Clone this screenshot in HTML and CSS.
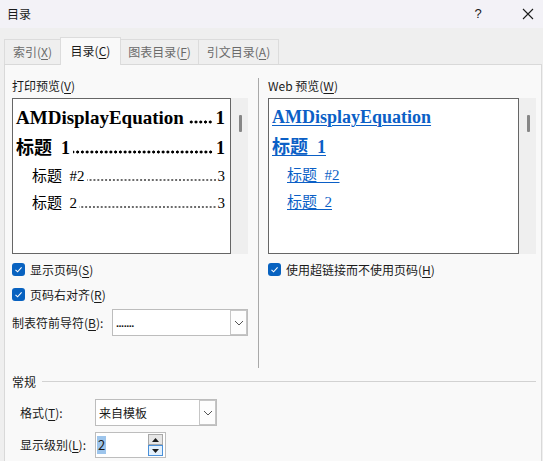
FILE: index.html
```html
<!DOCTYPE html>
<html>
<head>
<meta charset="utf-8">
<link rel="stylesheet" href="styles.css">
</head>
<body>
<div class="dialog">
  <div class="titlebar">
    <span class="title">目录</span>
    <span class="tb-help">?</span>
    <span class="tb-close"><svg width="12" height="12" viewBox="0 0 12 12"><path d="M1 1 L11 11 M11 1 L1 11" stroke="#1b1b1b" stroke-width="1.1" fill="none"/></svg></span>
  </div>
  <div class="tabstrip">
    <div class="tab">索引(<u>X</u>)</div>
    <div class="tab active">目录(<u>C</u>)</div>
    <div class="tab">图表目录(<u>F</u>)</div>
    <div class="tab">引文目录(<u>A</u>)</div>
  </div>
  <div class="panel">
    <div class="cols">
      <div class="col col-left">
        <div class="label">打印预览(<u>V</u>)</div>
        <div class="preview-wrap">
          <div class="preview print">
            <div class="pl l1"><span class="t">AMDisplayEquation</span><span class="lead bold"></span><span class="n">1</span></div>
            <div class="pl l2"><span class="t">标题&nbsp; 1</span><span class="lead bold"></span><span class="n">1</span></div>
            <div class="pl l3"><span class="t">标题&nbsp; #2</span><span class="lead"></span><span class="n">3</span></div>
            <div class="pl l4"><span class="t">标题&nbsp; 2</span><span class="lead"></span><span class="n">3</span></div>
          </div>
          <div class="vscroll"><div class="thumb"></div></div>
        </div>
        <div class="check first"><span class="box"><svg width="13" height="13" viewBox="0 0 13 13"><path d="M3.5 6.8 L5.6 8.8 L9.6 4.4" stroke="#fff" stroke-width="1.1" fill="none"/></svg></span>显示页码(<u>S</u>)</div>
        <div class="check"><span class="box"><svg width="13" height="13" viewBox="0 0 13 13"><path d="M3.5 6.8 L5.6 8.8 L9.6 4.4" stroke="#fff" stroke-width="1.1" fill="none"/></svg></span>页码右对齐(<u>R</u>)</div>
        <div class="leader-row">
          <span class="leader-label">制表符前导符(<u>B</u>):</span>
          <div class="combo leader-combo"><span class="val dots">.......</span><span class="arrow"><svg width="10" height="6" viewBox="0 0 10 6"><path d="M1 1 L5 5 L9 1" stroke="#555" stroke-width="1" fill="none"/></svg></span></div>
        </div>
      </div>
      <div class="vdivider"></div>
      <div class="col col-right">
        <div class="label">Web 预览(<u>W</u>)</div>
        <div class="preview-wrap">
          <div class="preview web">
            <div class="wl w1"><a>AMDisplayEquation</a></div>
            <div class="wl w2"><a>标题&nbsp; 1</a></div>
            <div class="wl w3"><a>标题&nbsp; #2</a></div>
            <div class="wl w4"><a>标题&nbsp; 2</a></div>
          </div>
          <div class="vscroll"><div class="thumb"></div></div>
        </div>
        <div class="check first"><span class="box"><svg width="13" height="13" viewBox="0 0 13 13"><path d="M3.5 6.8 L5.6 8.8 L9.6 4.4" stroke="#fff" stroke-width="1.1" fill="none"/></svg></span>使用超链接而不使用页码(<u>H</u>)</div>
      </div>
    </div>
    <div class="group-head"><span>常规</span><span class="rule"></span></div>
    <div class="form-row fmt-row">
      <span class="form-label">格式(<u>T</u>):</span>
      <div class="combo fmt-combo"><span class="val">来自模板</span><span class="arrow"><svg width="10" height="6" viewBox="0 0 10 6"><path d="M1 1 L5 5 L9 1" stroke="#555" stroke-width="1" fill="none"/></svg></span></div>
    </div>
    <div class="form-row lvl-row">
      <span class="form-label">显示级别(<u>L</u>):</span>
      <div class="spin">
        <span class="spin-val"><span class="sel">2</span></span>
        <span class="spin-btns">
          <span class="sb up"><svg width="7" height="4" viewBox="0 0 7 4"><path d="M3.5 0 L7 4 L0 4 Z" fill="#1b1b1b"/></svg></span>
          <span class="sb down"><svg width="7" height="4" viewBox="0 0 7 4"><path d="M0 0 L7 0 L3.5 4 Z" fill="#1b1b1b"/></svg></span>
        </span>
      </div>
    </div>
  </div>
</div>
</body>
</html>
```

FILE: styles.css
```css
* { box-sizing: border-box; }
html, body { margin: 0; padding: 0; }
body {
  width: 543px;
  height: 461px;
  overflow: hidden;
  background: #efefef;
  font-family: "Noto Sans CJK SC", "Noto Sans", sans-serif;
  font-size: 12px;
  color: #1a1a1a;
}
u { text-decoration: underline; text-underline-offset: 2px; }
.dialog { width: 543px; height: 461px; display: flex; flex-direction: column; }

.titlebar {
  height: 28px;
  background: #f3f2f7;
  display: flex;
  align-items: center;
  padding-left: 7px;
}
.title { font-size: 12px; flex: 1; line-height: 16px; }
.tb-help { width: 12px; font-size: 13px; line-height: 16px; margin-right: 38px; text-align: center; font-family: "Liberation Sans", sans-serif; }
.tb-close { width: 12px; height: 12px; margin-right: 9px; display: flex; }

.tabstrip {
  height: 36px;
  display: flex;
  align-items: flex-end;
  padding-left: 4px;
  background: #efefef;
  position: relative;
  z-index: 2;
}
.tab {
  height: 25px;
  border: 1px solid #dcdcdc;
  border-bottom: none;
  margin-right: -1px;
  padding: 0;
  display: flex;
  align-items: center;
  justify-content: center;
  white-space: nowrap;
  color: #6a6a6a;
  background: #efefef;
  line-height: 16px;
}
.tab:nth-child(1) { width: 57px; }
.tab:nth-child(2) { width: 61px; }
.tab:nth-child(3) { width: 79px; }
.tab:nth-child(4) { width: 81px; }
.tab.active {
  height: 28px;
  margin-bottom: -1px;
  background: #f9f9f9;
  color: #1a1a1a;
  padding-bottom: 1px;
  position: relative;
  z-index: 3;
}

.panel {
  flex: 1;
  margin-left: 4px;
  width: 538px;
  border: 1px solid #d9d9d9;
  border-bottom: none;
  background: #f9f9f9;
  padding: 13px 5px 0 7px;
}
.cols { display: flex; }
.col-left { width: 236px; }
.col-right { width: 268px; }
.vdivider { width: 1px; height: 290px; background: #a9a9a9; margin: 0 9px 0 10px; }
.label { line-height: 16px; height: 16px; margin-bottom: 4px; }

.preview-wrap { display: flex; height: 156px; }
.preview {
  flex: 1;
  background: #fff;
  border: 1px solid #666;
  overflow: hidden;
}
.vscroll { width: 17px; background: #efefef; position: relative; }
.thumb { position: absolute; left: 8px; top: 17px; width: 3px; height: 17px; background: #878787; border-radius: 1px; }

.print { padding: 4px 5px 0 3px; font-family: "Liberation Serif", "Noto Sans CJK SC", serif; color: #000; }
.pl { display: flex; align-items: baseline; white-space: nowrap; }
.pl .t { flex: none; }
.pl .lead {
  flex: 1;
  align-self: baseline;
  height: 2px;
  background-image: radial-gradient(circle, #000 0.55px, transparent 0.9px);
  background-size: 3.9px 2px;
  background-repeat: repeat-x;
  background-position: right bottom;
  margin-right: 1px;
}
.pl .lead.bold {
  height: 4px;
  background-image: radial-gradient(circle, #000 1.3px, transparent 1.8px);
  background-size: 4.75px 4px;
  margin-right: 3px;
}
.pl .n { flex: none; }
.l1 { font-size: 19px; font-weight: bold; height: 30px; line-height: 30px; }
.l1 .lead { margin-left: 4px; }
.l2 { font-size: 18px; font-weight: bold; height: 30px; line-height: 30px; }
.l2 .lead { margin-left: 3px; }
.l3, .l4 { font-size: 15px; height: 27px; line-height: 27px; padding-left: 16px; }
.l3 .lead, .l4 .lead { margin-left: 2px; }

.web { padding: 4px 5px 0 3px; font-family: "Liberation Serif", "Noto Sans CJK SC", serif; }
.web a { color: #0b5fc6; text-decoration: underline; text-decoration-thickness: 1px; text-underline-offset: 2px; }
.wl { white-space: nowrap; }
.w1 { font-size: 18px; font-weight: bold; height: 29px; line-height: 29px; }
.w2 { font-size: 18px; font-weight: bold; height: 30px; line-height: 30px; }
.w3, .w4 { font-size: 15px; height: 27px; line-height: 27px; padding-left: 15px; }

.check { display: flex; align-items: center; height: 25px; line-height: 16px; }
.check.first { margin-top: 3px; }
.box {
  width: 13px; height: 13px;
  border-radius: 3px;
  background: #0862c0;
  display: flex;
  margin-right: 5px;
}

.leader-row { display: flex; align-items: center; margin-top: 2px; height: 27px; }
.leader-label { width: 100px; }
.combo {
  height: 27px;
  border: 1px solid #bdbdbd;
  background: #fff;
  display: flex;
  align-items: stretch;
}
.combo .val { flex: 1; display: flex; align-items: center; padding-left: 3px; line-height: 16px; }
.combo .dots { font-family: "Liberation Sans", sans-serif; font-weight: bold; font-size: 11px; letter-spacing: -0.5px; padding-top: 1px; }
.combo .arrow {
  width: 17px;
  border: 1px solid #c6c6c6;
  background: #fdfdfd;
  display: flex;
  align-items: center;
  justify-content: center;
}
.leader-combo { width: 136px; }

.group-head { display: flex; align-items: center; margin-top: 6px; height: 16px; }
.group-head span:first-child { line-height: 16px; margin-right: 6px; }
.group-head .rule { flex: 1; height: 1px; background: #d2d2d2; margin-top: -2px; }

.form-row { display: flex; align-items: center; padding-left: 8px; }
.form-label { width: 75px; line-height: 16px; }
.fmt-row { margin-top: 9px; }
.fmt-combo { width: 122px; }
.fmt-combo .val { font-size: 12px; padding-left: 3px; }
.lvl-row { margin-top: 6px; }

.spin {
  width: 71px;
  height: 26px;
  border: 1px solid #bdbdbd;
  background: #fff;
  display: flex;
  align-items: center;
}
.spin-val { flex: 1; padding-left: 1px; display: flex; align-items: center; }
.sel { background: #9dc5ec; line-height: 18px; padding: 0 1px; font-size: 13px; }
.spin-btns { width: 15px; display: flex; flex-direction: column; margin-right: 2px; height: 22px; }
.sb { flex: 1; display: flex; align-items: center; justify-content: center; border: 1px solid #a8a8a8; background: #e6e6e6; }
.sb.down { border-color: #4a90d9; background: #e3f0fc; }
```
